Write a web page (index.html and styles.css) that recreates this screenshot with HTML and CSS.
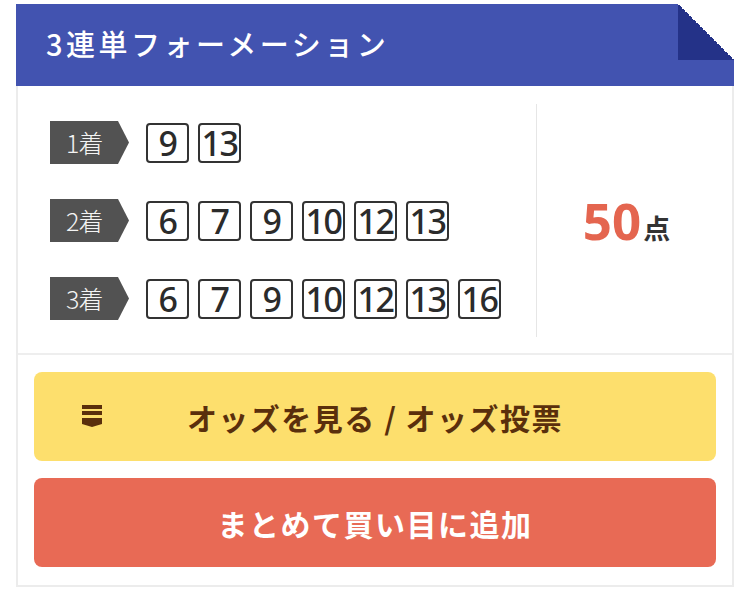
FILE: index.html
```html
<!DOCTYPE html>
<html lang="ja">
<head>
<meta charset="utf-8">
<link rel="stylesheet" href="styles.css">
</head>
<body>
<div class="panel">
  <div class="head">
    <h1 class="title">3連単フォーメーション</h1>
    <span class="fold"></span>
  </div>
  <div class="card">
    <div class="sel">
      <div class="rows">
        <div class="row"><span class="tag">1着</span><div class="nums"><span class="n">9</span><span class="n">13</span></div></div>
        <div class="row"><span class="tag">2着</span><div class="nums"><span class="n">6</span><span class="n">7</span><span class="n">9</span><span class="n">10</span><span class="n">12</span><span class="n">13</span></div></div>
        <div class="row"><span class="tag">3着</span><div class="nums"><span class="n">6</span><span class="n">7</span><span class="n">9</span><span class="n">10</span><span class="n">12</span><span class="n">13</span><span class="n">16</span></div></div>
      </div>
      <div class="total"><span class="cnt">50</span><span class="unit">点</span></div>
    </div>
    <div class="actions">
      <button class="btn btn-odds">
        <svg class="ico" width="20" height="22" viewBox="0 0 20 22"><rect x="0" y="0" width="20" height="4" fill="#5a2f0c"/><rect x="0" y="6" width="20" height="4" fill="#5a2f0c"/><path d="M0 13 H20 V19 L10 22 L0 19 Z" fill="#5a2f0c"/></svg>
        <span>オッズを見る / オッズ投票</span>
      </button>
      <button class="btn btn-add"><span>まとめて買い目に追加</span></button>
    </div>
  </div>
</div>
</body>
</html>
```

FILE: styles.css
```css
* { box-sizing: border-box; }
body {
  margin: 0;
  background: #fff;
  font-family: "Noto Sans CJK JP", "Noto Sans", sans-serif;
}
.panel {
  width: 718px;
  margin: 4px 0 0 16px;
}
.head {
  position: relative;
  height: 82px;
  background: #4253b0;
  display: flex;
  align-items: center;
  padding-left: 30px;
}
.title {
  margin: 0;
  color: #fff;
  font-size: 29px;
  font-weight: 500;
  letter-spacing: 3.5px;
  line-height: 1;
  padding-bottom: 4px;
}
.fold {
  position: absolute;
  top: 0;
  right: 0;
  width: 56px;
  height: 56px;
  background: linear-gradient(to top right, #243288 50%, #fff 50%);
}
.card {
  border: 2px solid #ececec;
  border-top: none;
}
.sel {
  display: flex;
  padding: 18px 0 16px;
  border-bottom: 2px solid #eeeeee;
}
.rows {
  width: 519px;
  border-right: 1px solid #e6e6e6;
  padding: 17px 0 17px 32px;
  display: flex;
  flex-direction: column;
  gap: 35px;
}
.row {
  display: flex;
  align-items: center;
  height: 43px;
}
.tag {
  width: 79px;
  height: 43px;
  background: #525252;
  color: #f4f4f4;
  font-size: 25px;
  font-weight: 300;
  line-height: 43px;
  padding-left: 16px;
  clip-path: polygon(0 0, 68px 0, 79px 50%, 68px 100%, 0 100%);
  margin-right: 17px;
  letter-spacing: -1px;
}
.nums {
  display: flex;
  gap: 9px;
}
.n {
  width: 43px;
  height: 40px;
  border: 2px solid #333;
  border-radius: 4px;
  display: flex;
  align-items: center;
  justify-content: center;
  font-family: "Noto Sans", sans-serif;
  font-size: 34px;
  font-weight: 500;
  letter-spacing: -1.5px;
  color: #2b2b2b;
  line-height: 1;
}
.total {
  flex: 1;
  display: flex;
  align-items: center;
  justify-content: center;
  padding-right: 16px;
}
.cnt {
  color: #e4654f;
  font-family: "Noto Sans", sans-serif;
  font-size: 51px;
  font-weight: 700;
  line-height: 1;
}
.unit {
  color: #333;
  font-size: 27px;
  font-weight: 700;
  margin-left: 2px;
  margin-top: 14px;
}
.actions {
  padding: 17px 16px 18px;
  display: flex;
  flex-direction: column;
  gap: 17px;
}
.btn {
  position: relative;
  height: 89px;
  border: none;
  border-radius: 8px;
  font-family: "Noto Sans CJK JP", sans-serif;
  font-size: 30px;
  font-weight: 700;
  letter-spacing: 1.5px;
  display: flex;
  align-items: center;
  justify-content: center;
  padding: 0;
}
.btn-odds {
  background: #fddf6d;
  color: #5a2f0c;
}
.btn-odds .ico {
  position: absolute;
  left: 48px;
  top: 33px;
}
.btn-add {
  background: #e86a55;
  color: #fff;
}
```
